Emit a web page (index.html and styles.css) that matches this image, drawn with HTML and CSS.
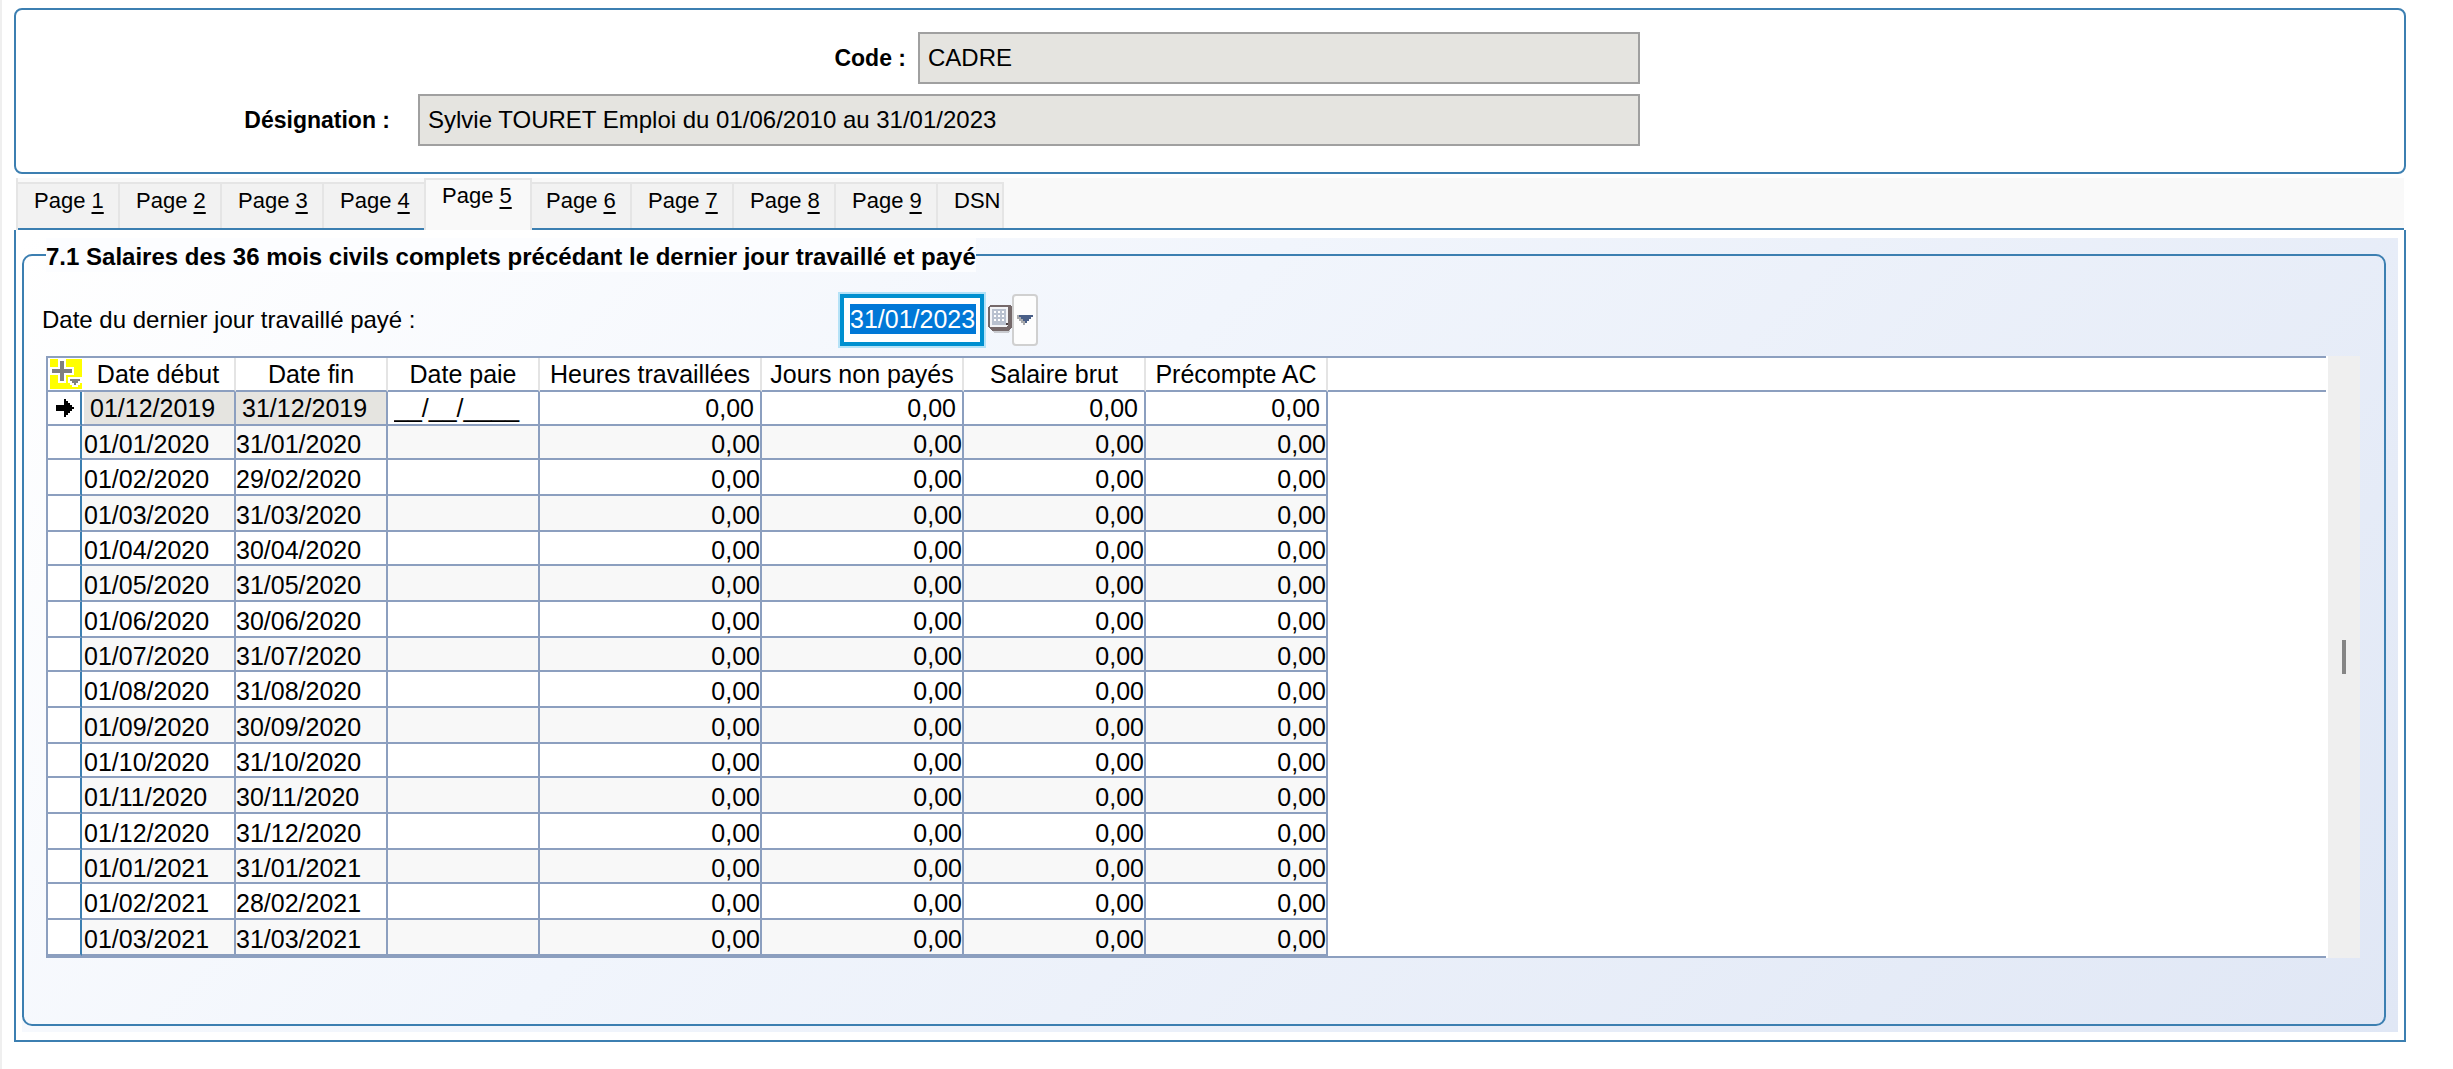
FILE: index.html
```html
<!DOCTYPE html>
<html lang="fr">
<head>
    <meta charset="UTF-8">
    <meta name="viewport" content="width=device-width, initial-scale=1.0">
    <title>Attestation employeur</title>
    <link rel="stylesheet" href="styles.css">
</head>
<body>
    <!-- En-tête -->
    <header class="entete">
        <label for="code">Code :</label>
        <input type="text" id="code" class="champ-code" value="CADRE" readonly>
        <label for="designation" class="label-designation">Désignation :</label>
        <input type="text" id="designation" class="champ-designation" value="Sylvie TOURET Emploi du 01/06/2010 au 31/01/2023" readonly>
    </header>

    <!-- Onglets -->
    <nav class="onglets">
        <button class="onglet">Page <u>1</u></button>
        <button class="onglet">Page <u>2</u></button>
        <button class="onglet">Page <u>3</u></button>
        <button class="onglet">Page <u>4</u></button>
        <button class="onglet actif">Page <u>5</u></button>
        <button class="onglet">Page <u>6</u></button>
        <button class="onglet">Page <u>7</u></button>
        <button class="onglet">Page <u>8</u></button>
        <button class="onglet">Page <u>9</u></button>
        <button class="onglet dernier">DSN</button>
    </nav>

    <main class="panneau">
        <div class="fond">
            <fieldset class="salaires">
                <legend>7.1 Salaires des 36 mois civils complets précédant le dernier jour travaillé et payé</legend>

                <div class="ligne-date">
                    <label for="dernierJour">Date du dernier jour travaillé payé :</label>
                    <div class="cadre-date"><input type="text" id="dernierJour" value="31/01/2023"></div>
                    <button class="btn-calendrier" aria-label="Calendrier">
                        <svg width="24" height="30" viewBox="0 0 12 15">
                            <path d="M2 12h8l1 1-1 1H3z" fill="#c9cbd0"/>
                            <path d="M1 0h10l1 1v10l-2 2H2l-2-2V1z" fill="#75696a"/>
                            <path d="M1 1h9v9l-1 1H1z" fill="#f3f4f7"/>
                            <path d="M2 2h7v8H2z" fill="#b9c1cf"/>
                            <path d="M3 3h1v1H3zM5 3h1v1H5zM7 3h1v1H7zM3 5h1v1H3zM5 5h1v1H5zM7 5h1v1H7zM3 7h1v1H3zM5 7h1v1H5zM7 7h1v1H7z" fill="#fff"/>
                            <path d="M9 9h1v1H9z" fill="#4c4243"/>
                        </svg>
                    </button>
                    <button class="btn-liste" aria-label="Choisir une date">
                        <svg width="16" height="10" viewBox="0 0 8 5">
                            <path d="M0 0h8v1H7v1H6v1H5v1H4v1H3V4H2V3H1V2H0z" fill="#a9aaac"/>
                            <path d="M1 0h7v1H7v1H6v1H5v1H4V3H3V2H2V1H1z" fill="#4a5f87"/>
                        </svg>
                    </button>
                </div>

                <div class="grille">
                    <div class="zone-table">
                        <table>
                            <colgroup>
                                <col class="c-marque"><col class="c-debut"><col class="c-date"><col class="c-date">
                                <col class="c-heures"><col class="c-jours"><col class="c-montant"><col class="c-montant"><col>
                            </colgroup>
                            <thead>
                                <tr>
                                    <th class="coin">
                                        <button class="btn-plus" aria-label="Ajouter">
                                            <svg width="32" height="30" viewBox="0 0 16 15">
                                                <path d="M0 0h16v15H0z" fill="#ff0"/>
                                                <path d="M4 0h4v4h4v4H8v4H4V8H0V4h4zM9 9h7v3h-1v1h-1v1h-3v-1h-1v-1H9z" fill="#fff"/>
                                                <path d="M5 1h2v4h4v2H7v4H5V7H1V5h4z" fill="#808080"/>
                                                <path d="M10 10h5v1h-1v1h-1v1h-1v-1h-1v-1h-1z" fill="#808080"/>
                                            </svg>
                                        </button>
                                    </th>
                                    <th>Date début</th>
                                    <th>Date fin</th>
                                    <th>Date paie</th>
                                    <th>Heures travaillées</th>
                                    <th>Jours non payés</th>
                                    <th>Salaire brut</th>
                                    <th>Précompte AC</th>
                                    <td class="reste"></td>
                                </tr>
                            </thead>
                            <tbody>
                                <!-- Ligne en cours de saisie -->
                                <tr class="saisie">
                                    <td class="marque">
                                        <svg width="18" height="18" viewBox="0 0 9 9">
                                            <path d="M4 0h1v1h1v1h1v1h1v1h1v1H8v1H7v1H6v1H5v1H4V6H0V3h4z"/>
                                        </svg>
                                    </td>
                                    <td><input type="text" aria-label="Date début" class="verrou" value="01/12/2019" readonly></td>
                                    <td><input type="text" aria-label="Date fin" class="verrou" value="31/12/2019" readonly></td>
                                    <td><input type="text" aria-label="Date paie" value="__/__/____"></td>
                                    <td><input type="text" aria-label="Heures travaillées" class="nombre" value="0,00"></td>
                                    <td><input type="text" aria-label="Jours non payés" class="nombre" value="0,00"></td>
                                    <td><input type="text" aria-label="Salaire brut" class="nombre" value="0,00"></td>
                                    <td><input type="text" aria-label="Précompte AC" class="nombre" value="0,00"></td>
                                </tr>
                                <tr><td></td><td>01/01/2020</td><td>31/01/2020</td><td></td><td>0,00</td><td>0,00</td><td>0,00</td><td>0,00</td></tr>
                                <tr><td></td><td>01/02/2020</td><td>29/02/2020</td><td></td><td>0,00</td><td>0,00</td><td>0,00</td><td>0,00</td></tr>
                                <tr><td></td><td>01/03/2020</td><td>31/03/2020</td><td></td><td>0,00</td><td>0,00</td><td>0,00</td><td>0,00</td></tr>
                                <tr><td></td><td>01/04/2020</td><td>30/04/2020</td><td></td><td>0,00</td><td>0,00</td><td>0,00</td><td>0,00</td></tr>
                                <tr><td></td><td>01/05/2020</td><td>31/05/2020</td><td></td><td>0,00</td><td>0,00</td><td>0,00</td><td>0,00</td></tr>
                                <tr><td></td><td>01/06/2020</td><td>30/06/2020</td><td></td><td>0,00</td><td>0,00</td><td>0,00</td><td>0,00</td></tr>
                                <tr><td></td><td>01/07/2020</td><td>31/07/2020</td><td></td><td>0,00</td><td>0,00</td><td>0,00</td><td>0,00</td></tr>
                                <tr><td></td><td>01/08/2020</td><td>31/08/2020</td><td></td><td>0,00</td><td>0,00</td><td>0,00</td><td>0,00</td></tr>
                                <tr><td></td><td>01/09/2020</td><td>30/09/2020</td><td></td><td>0,00</td><td>0,00</td><td>0,00</td><td>0,00</td></tr>
                                <tr><td></td><td>01/10/2020</td><td>31/10/2020</td><td></td><td>0,00</td><td>0,00</td><td>0,00</td><td>0,00</td></tr>
                                <tr><td></td><td>01/11/2020</td><td>30/11/2020</td><td></td><td>0,00</td><td>0,00</td><td>0,00</td><td>0,00</td></tr>
                                <tr><td></td><td>01/12/2020</td><td>31/12/2020</td><td></td><td>0,00</td><td>0,00</td><td>0,00</td><td>0,00</td></tr>
                                <tr><td></td><td>01/01/2021</td><td>31/01/2021</td><td></td><td>0,00</td><td>0,00</td><td>0,00</td><td>0,00</td></tr>
                                <tr><td></td><td>01/02/2021</td><td>28/02/2021</td><td></td><td>0,00</td><td>0,00</td><td>0,00</td><td>0,00</td></tr>
                                <tr><td></td><td>01/03/2021</td><td>31/03/2021</td><td></td><td>0,00</td><td>0,00</td><td>0,00</td><td>0,00</td></tr>
                            </tbody>
                        </table>
                    </div>
                    <div class="defilement"><span class="curseur"></span></div>
                </div>
            </fieldset>
        </div>
    </main>
</body>
</html>
```

FILE: styles.css
```css
* {
    box-sizing: border-box;
}

body {
    margin: 0;
    padding: 8px 47px 24px 12px;
    min-height: 100vh;
    border-left: 2px solid #efefef;
    background: #fff;
    color: #000;
    font-family: "Liberation Sans", Arial, sans-serif;
    font-size: 24px;
}

input, button {
    margin: 0;
    font: inherit;
    color: inherit;
}

button {
    padding: 0;
    border: none;
    background: none;
}

svg {
    display: block;
    shape-rendering: crispEdges;
}

/* En-tête */
.entete {
    display: grid;
    grid-template-columns: 374px 28px 488px 12px 722px;
    row-gap: 10px;
    align-items: center;
    padding: 22px 0 26px;
    border: 2px solid #3c7fb1;
    border-radius: 8px;
}

.entete label {
    grid-column: 1 / 4;
    justify-self: end;
    font-size: 23px;
    font-weight: bold;
}

.entete .label-designation {
    grid-column: 1;
}

.entete input {
    height: 52px;
    padding: 0 8px;
    border: 2px solid #a0a0a0;
    background: #e5e4e0;
}

.champ-code {
    grid-column: 5;
}

.champ-designation {
    grid-column: 3 / 6;
}

/* Onglets */
.onglets {
    display: flex;
    align-items: flex-end;
    height: 52px;
    margin: 4px 2px 0;
    border-left: 2px solid #e5e5e5;
    background: linear-gradient(#3c7fb1, #3c7fb1) bottom / 100% 2px no-repeat #f9f9f9;
}

.onglet {
    height: 46px;
    width: 102px;
    margin-bottom: 2px;
    padding: 0 0 10px 16px;
    border-top: 2px solid #e5e5e5;
    border-right: 2px solid #e5e5e5;
    background: #f2f2f2;
    font-size: 22px;
    text-align: left;
}

.onglet u {
    text-underline-offset: 4px;
    text-decoration-thickness: 2px;
}

/* L'onglet actif déborde sur ses voisins et cache la ligne bleue */
.onglet.actif {
    z-index: 1;
    width: 108px;
    height: 52px;
    margin: 0 -2px;
    padding-bottom: 18px;
    border-left: 2px solid #e5e5e5;
    background: #f9f9f9;
}

.onglet.dernier {
    width: 66px;
}

/* Contenu de la page */
.panneau {
    padding: 8px 6px;
    border: 2px solid #3c7fb1;
    border-top: none;
}

.fond {
    padding: 0 12px 6px 0;
    background: linear-gradient(135deg, #fff 0%, #f1f5fc 40%, #e0e7f5 100%);
}

.salaires {
    min-width: 0;
    margin: 0;
    padding: 20px 24px 66px 18px;
    border: 2px solid #3c7fb1;
    border-radius: 10px;
}

.salaires legend {
    margin-left: 4px;
    padding: 4px 0 0;
    background: #fcfdff;
    font-weight: bold;
    line-height: 30px;
}

.ligne-date {
    display: flex;
    align-items: center;
}

.ligne-date label {
    width: 796px;
}

.cadre-date {
    margin: 2px;
    padding: 6px 4px 8px 6px;
    border: 4px solid #0090d0;
    outline: 2px solid #b5e2f7;
    background: #fff;
}

.cadre-date input {
    display: block;
    width: 126px;
    height: 30px;
    padding: 0;
    border: none;
    outline: none;
    background: #0078d7;
    color: #fff;
    font-size: 25px;
}

.btn-calendrier {
    margin-left: 2px;
}

.btn-liste {
    display: flex;
    justify-content: center;
    align-items: center;
    width: 26px;
    height: 52px;
    border: 2px solid #d0d0d0;
    border-radius: 4px;
    background: #fdfdfd;
}

/* Grille des salaires */
.grille {
    display: flex;
    margin: 8px 0 0 4px;
}

.zone-table {
    flex: 1;
    min-width: 0;
    padding-right: 2px;
    background: #fff;
}

table {
    width: 100%;
    table-layout: fixed;
    border-collapse: separate;
    border-spacing: 0;
    border: 2px solid #8c9fbf;
    border-right: none;
    font-size: 25px;
}

.c-marque { width: 34px; }
.c-debut { width: 154px; }
.c-date { width: 152px; }
.c-heures { width: 222px; }
.c-jours { width: 202px; }
.c-montant { width: 182px; }

th, td {
    height: 36px;
    padding: 0;
    border-right: 2px solid #8c9fbf;
    border-bottom: 2px solid #8c9fbf;
    line-height: 28px;
    white-space: nowrap;
}

th {
    height: 34px;
    border-right-color: #e4e4e4;
    font-weight: normal;
}

th.coin {
    border-right: none;
}

.btn-plus {
    display: block;
    margin-left: 2px;
}

td.reste {
    height: 34px;
    border-right: none;
}

tbody tr:first-child td,
tbody tr:nth-child(3n+2) td {
    height: 34px;
}

tbody tr:nth-child(n+2) td {
    padding-top: 3px;
}

tbody td:first-child {
    border-right-color: #3c7fb1;
}

tbody td:nth-child(2) {
    padding-left: 2px;
}

tbody td:nth-child(n+5) {
    text-align: right;
}

tbody tr:nth-child(even) td:nth-child(n+2) {
    background: #f8f8f8;
}

.marque svg {
    margin-left: 8px;
}

.saisie input {
    display: block;
    width: 100%;
    height: 32px;
    padding: 0 6px;
    border: none;
    background: #fff;
}

.saisie .verrou {
    background: #e5e4e0;
}

.saisie .nombre {
    text-align: right;
}

.defilement {
    display: flex;
    justify-content: center;
    align-items: center;
    width: 32px;
    background: #efefef;
}

.curseur {
    width: 4px;
    height: 34px;
    background: #858585;
}
```
